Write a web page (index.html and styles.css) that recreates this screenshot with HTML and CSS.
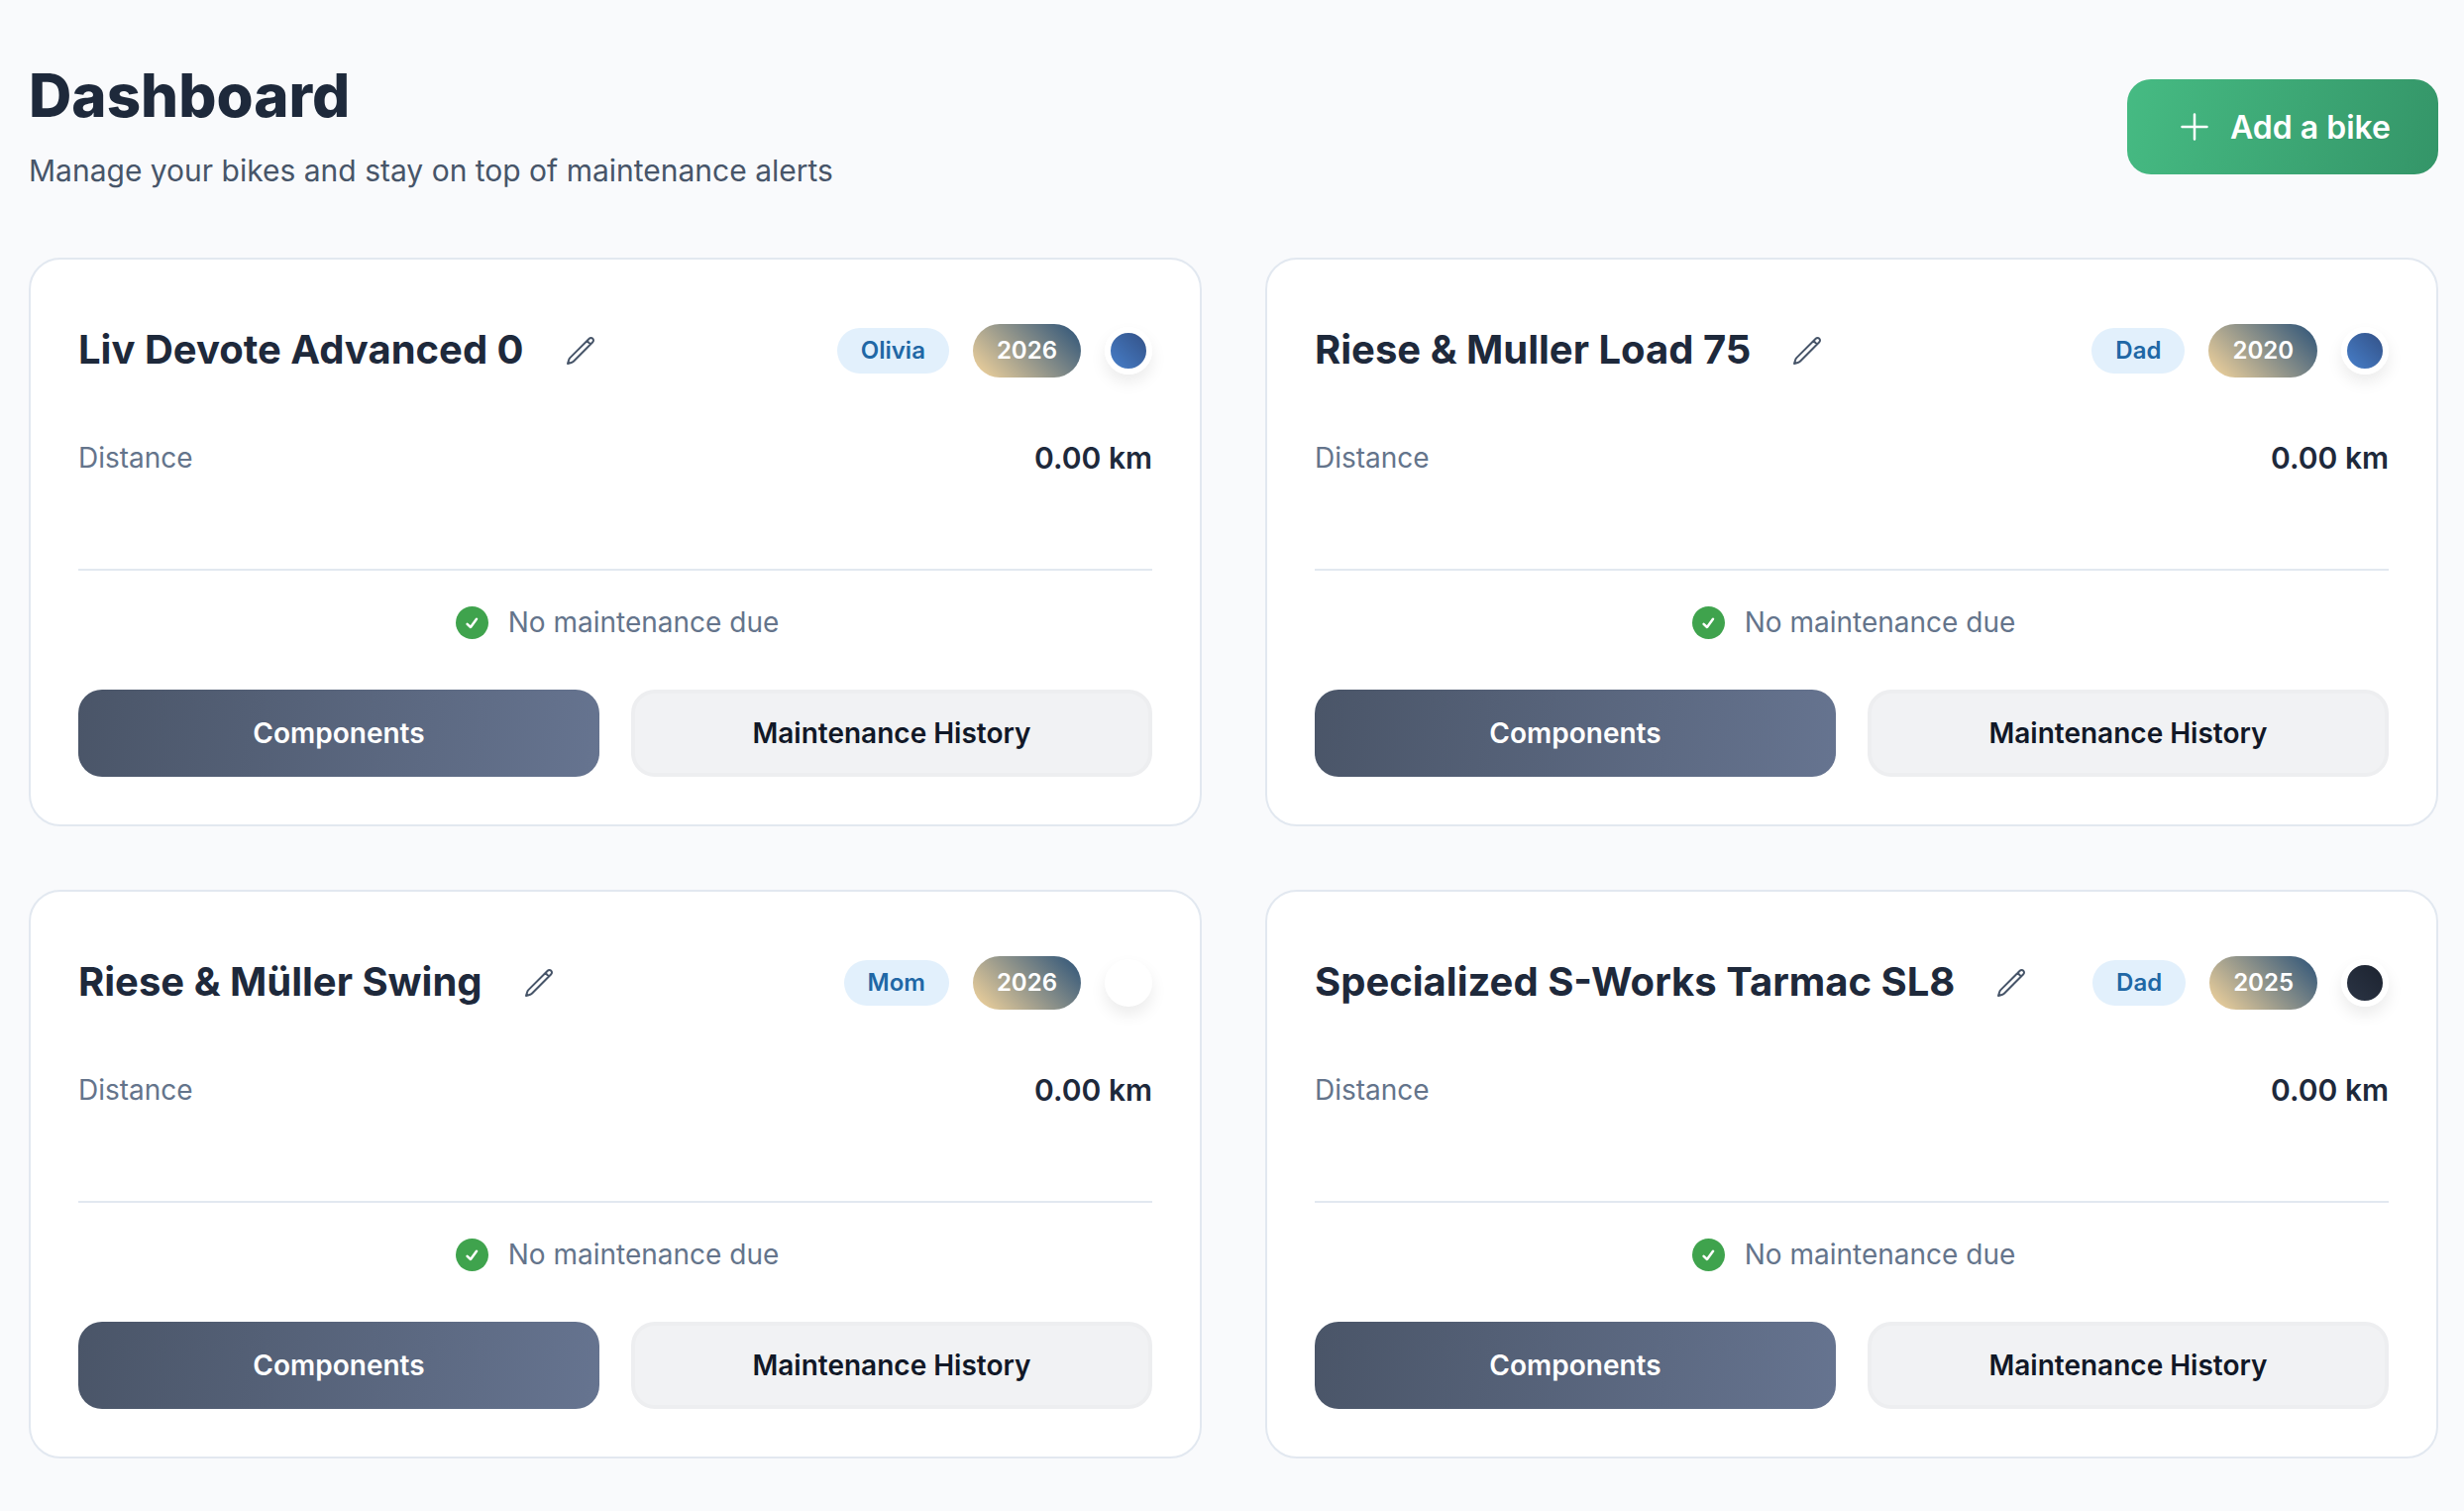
FILE: index.html
```html
<!DOCTYPE html>
<html lang="en">
<head>
<meta charset="utf-8">
<meta name="viewport" content="width=device-width, initial-scale=1">
<title>Dashboard</title>
<link rel="stylesheet" href="styles.css">
</head>
<body>
<svg class="sprite" aria-hidden="true">
  <symbol id="icon-pencil" viewBox="0 0 24 24">
    <path fill="none" stroke="currentColor" stroke-width="1.5" stroke-linecap="round" stroke-linejoin="round" d="m16.862 4.487 1.687-1.688a1.875 1.875 0 1 1 2.652 2.652L6.832 19.82a4.5 4.5 0 0 1-1.897 1.13l-2.685.8.8-2.685a4.5 4.5 0 0 1 1.13-1.897L16.863 4.487Zm0 0L19.5 7.125"/>
  </symbol>
  <symbol id="icon-plus" viewBox="0 0 24 24">
    <path fill="none" stroke="currentColor" stroke-width="1.5" stroke-linecap="round" d="M12 4.5v15m7.5-7.5h-15"/>
  </symbol>
  <symbol id="icon-check" viewBox="0 0 33 33">
    <circle cx="16.5" cy="16.5" r="16.5" fill="#3fa34d"/>
    <path fill="none" stroke="#fff" stroke-width="2.5" stroke-linecap="round" stroke-linejoin="round" d="m11.6 17.8 3.4 3.2 6-8.2"/>
  </symbol>
</svg>
<main class="page">
  <header class="page-header">
    <div>
      <h1 class="page-title">Dashboard</h1>
      <p class="page-subtitle">Manage your bikes and stay on top of maintenance alerts</p>
    </div>
    <button class="add-button" type="button"><svg class="add-icon" aria-hidden="true"><use href="#icon-plus"/></svg>Add a bike</button>
  </header>

  <section class="bikes">
    <article class="card">
      <div class="card-header">
        <h2 class="bike-name">Liv Devote Advanced 0</h2>
        <button class="edit-button" type="button" aria-label="Edit"><svg class="edit-icon" aria-hidden="true"><use href="#icon-pencil"/></svg></button>
        <div class="tags">
          <span class="owner">Olivia</span>
          <span class="year">2026</span>
          <span class="swatch swatch-blue"></span>
        </div>
      </div>
      <div class="stat"><span class="stat-label">Distance</span><span class="stat-value">0.00 km</span></div>
      <p class="status"><svg class="status-icon" aria-hidden="true"><use href="#icon-check"/></svg>No maintenance due</p>
      <div class="actions">
        <button class="action action-primary" type="button">Components</button>
        <button class="action action-secondary" type="button">Maintenance History</button>
      </div>
    </article>

    <article class="card">
      <div class="card-header">
        <h2 class="bike-name">Riese &amp; Muller Load 75</h2>
        <button class="edit-button" type="button" aria-label="Edit"><svg class="edit-icon" aria-hidden="true"><use href="#icon-pencil"/></svg></button>
        <div class="tags">
          <span class="owner">Dad</span>
          <span class="year">2020</span>
          <span class="swatch swatch-blue"></span>
        </div>
      </div>
      <div class="stat"><span class="stat-label">Distance</span><span class="stat-value">0.00 km</span></div>
      <p class="status"><svg class="status-icon" aria-hidden="true"><use href="#icon-check"/></svg>No maintenance due</p>
      <div class="actions">
        <button class="action action-primary" type="button">Components</button>
        <button class="action action-secondary" type="button">Maintenance History</button>
      </div>
    </article>

    <article class="card">
      <div class="card-header">
        <h2 class="bike-name">Riese &amp; Müller Swing</h2>
        <button class="edit-button" type="button" aria-label="Edit"><svg class="edit-icon" aria-hidden="true"><use href="#icon-pencil"/></svg></button>
        <div class="tags">
          <span class="owner">Mom</span>
          <span class="year">2026</span>
          <span class="swatch swatch-white"></span>
        </div>
      </div>
      <div class="stat"><span class="stat-label">Distance</span><span class="stat-value">0.00 km</span></div>
      <p class="status"><svg class="status-icon" aria-hidden="true"><use href="#icon-check"/></svg>No maintenance due</p>
      <div class="actions">
        <button class="action action-primary" type="button">Components</button>
        <button class="action action-secondary" type="button">Maintenance History</button>
      </div>
    </article>

    <article class="card">
      <div class="card-header">
        <h2 class="bike-name">Specialized S-Works Tarmac SL8</h2>
        <button class="edit-button" type="button" aria-label="Edit"><svg class="edit-icon" aria-hidden="true"><use href="#icon-pencil"/></svg></button>
        <div class="tags">
          <span class="owner">Dad</span>
          <span class="year">2025</span>
          <span class="swatch swatch-black"></span>
        </div>
      </div>
      <div class="stat"><span class="stat-label">Distance</span><span class="stat-value">0.00 km</span></div>
      <p class="status"><svg class="status-icon" aria-hidden="true"><use href="#icon-check"/></svg>No maintenance due</p>
      <div class="actions">
        <button class="action action-primary" type="button">Components</button>
        <button class="action action-secondary" type="button">Maintenance History</button>
      </div>
    </article>
  </section>
</main>
</body>
</html>
```
FILE: styles.css
```css
* {
  box-sizing: border-box;
}

body {
  margin: 0;
  background: #f9fafc;
  color: #1e293b;
  font-family: Inter, sans-serif;
}

h1, h2, p {
  margin: 0;
}

button {
  border: 0;
  font-family: inherit;
  cursor: pointer;
}

.sprite {
  display: none;
}

.page {
  padding: 60px 26px 52px 29px;
}

.page-header {
  display: flex;
  align-items: center;
  justify-content: space-between;
  margin-bottom: 64px;
}

.page-title {
  font-size: 60px;
  font-weight: 800;
  line-height: 72px;
}

.page-subtitle {
  margin-top: 16px;
  color: #475569;
  font-size: 30px;
  line-height: 48px;
}

.add-button {
  display: flex;
  align-items: center;
  gap: 16px;
  height: 96px;
  padding: 0 48px;
  border-radius: 24px;
  background: linear-gradient(105deg, #46bb83, #349568);
  color: #fff;
  font-size: 32px;
  font-weight: 600;
}

.add-icon {
  width: 40px;
  height: 40px;
}

.bikes {
  display: grid;
  grid-template-columns: 1fr 1fr;
  gap: 64px;
}

.card {
  padding: 48px;
  border: 2px solid #e2e8f0;
  border-radius: 32px;
  background: #fff;
}

.card-header {
  display: flex;
  align-items: center;
  height: 88px;
  margin-bottom: 40px;
}

.bike-name {
  padding-bottom: 2px;
  font-size: 40px;
  font-weight: 700;
  line-height: 48px;
}

.edit-button {
  display: grid;
  place-items: center;
  width: 88px;
  height: 88px;
  margin-left: 13px;
  padding: 0;
  background: none;
  color: #475569;
}

.edit-icon {
  width: 32px;
  height: 32px;
}

.tags {
  display: flex;
  align-items: center;
  gap: 24px;
  margin-left: auto;
  font-size: 24px;
  font-weight: 600;
}

.owner {
  padding: 0 24px;
  border-radius: 24px;
  background: #e2f0fc;
  color: #2067a5;
  line-height: 46px;
}

.year {
  padding: 0 24px;
  border-radius: 28px;
  background: linear-gradient(45deg, #f6d69d, #2b5278);
  color: #fff;
  line-height: 54px;
}

.swatch {
  width: 48px;
  height: 48px;
  border: 6px solid #fff;
  border-radius: 50%;
  background-origin: border-box;
  box-shadow: 0 8px 16px rgba(0, 0, 0, 0.08);
}

.swatch-blue {
  background-image: linear-gradient(45deg, #4a86d4, #304a7c);
}

.swatch-white {
  background-color: #fff;
}

.swatch-black {
  background-image: linear-gradient(45deg, #2d3748, #1a202c);
}

.stat {
  display: flex;
  align-items: center;
  justify-content: space-between;
  margin-bottom: 88px;
  line-height: 48px;
}

.stat-label {
  color: #64748b;
  font-size: 28px;
}

.stat-value {
  font-size: 30px;
  font-weight: 600;
}

.status {
  display: flex;
  align-items: center;
  justify-content: center;
  gap: 20px;
  padding: 32px 0 48px 4px;
  border-top: 2px solid #e2e8f0;
  color: #64748b;
  font-size: 28px;
  line-height: 40px;
}

.status-icon {
  width: 33px;
  height: 33px;
}

.actions {
  display: grid;
  grid-template-columns: 1fr 1fr;
  gap: 32px;
}

.action {
  height: 88px;
  border-radius: 24px;
  font-size: 28px;
  font-weight: 600;
}

.action-primary {
  background: linear-gradient(100deg, #4a5568, #667490);
  color: #fff;
}

.action-secondary {
  border: 4px solid #edeef0;
  background: #f1f2f4;
  color: #111827;
}
```
